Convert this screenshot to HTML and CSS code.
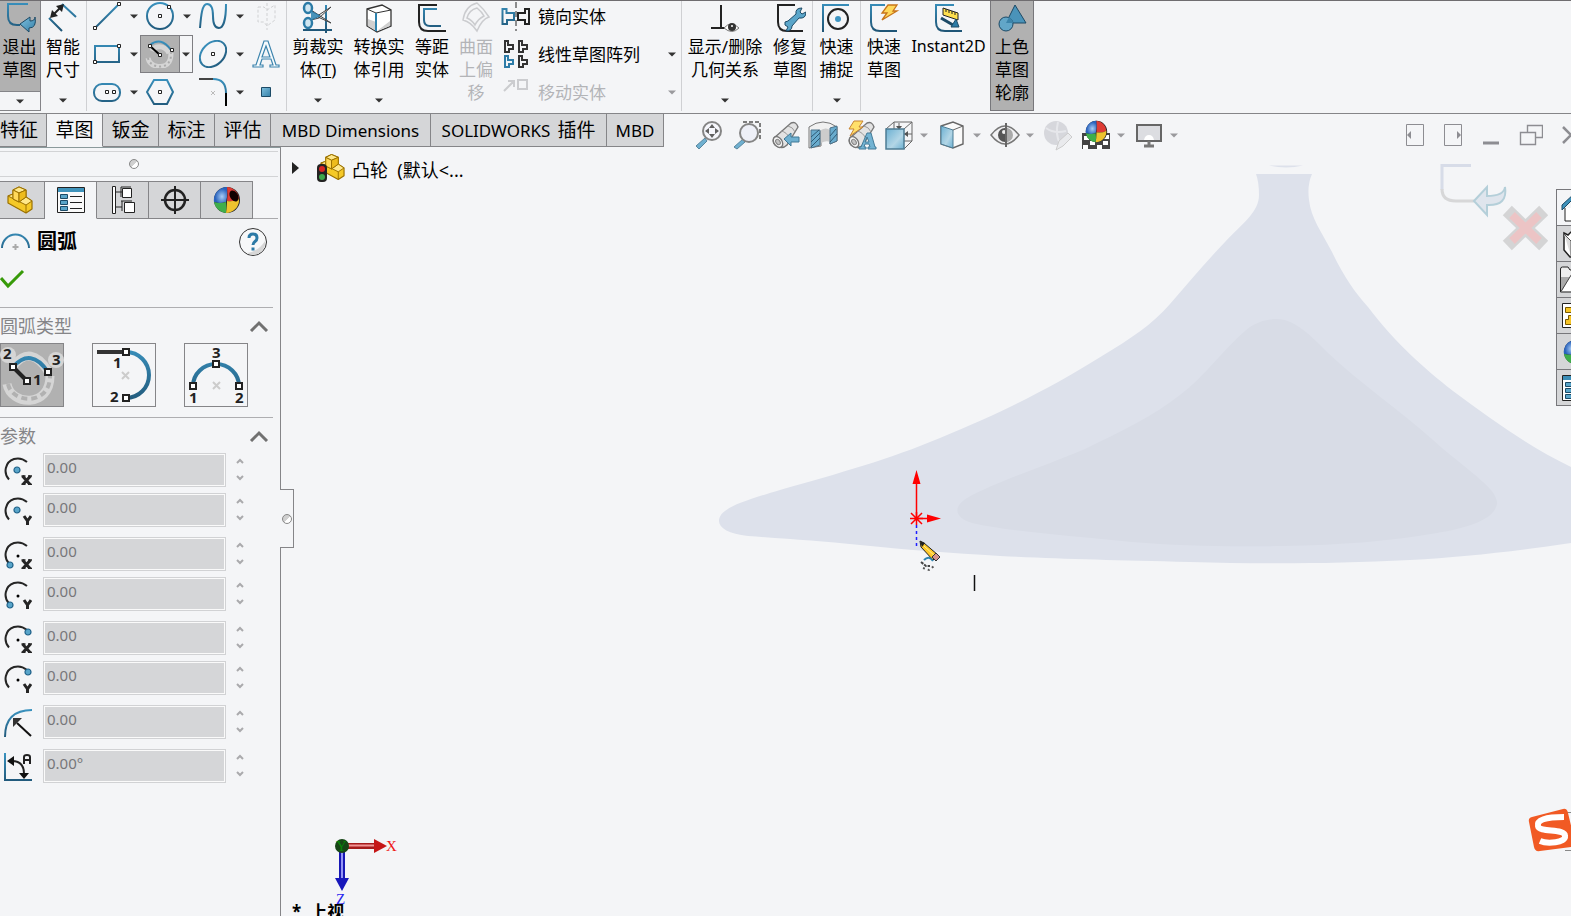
FILE: index.html
```html
<!DOCTYPE html>
<html lang="zh-CN">
<head>
<meta charset="utf-8">
<title>凸轮</title>
<link rel="stylesheet" href="styles.css">
</head>
<body>
<svg class="defs" width="0" height="0" aria-hidden="true">
  <defs>
    <linearGradient id="blue" gradientUnits="userSpaceOnUse" x1="0" y1="0" x2="0" y2="30"><stop offset="0" stop-color="#3a93c0"/><stop offset="1" stop-color="#1f5576"/></linearGradient>
    <linearGradient id="bigblue" gradientUnits="userSpaceOnUse" x1="0" y1="0" x2="0" y2="62"><stop offset="0" stop-color="#3a93c0"/><stop offset="1" stop-color="#1f5576"/></linearGradient>
    <linearGradient id="glass" x1="0" y1="0" x2="1" y2="1"><stop offset="0" stop-color="#7fc0de"/><stop offset="1" stop-color="#3580a8"/></linearGradient>
    <linearGradient id="pale" x1="0" y1="0" x2="1" y2="1"><stop offset="0" stop-color="#6bb0d2"/><stop offset=".6" stop-color="#b3d6e6"/><stop offset="1" stop-color="#6bb0d2"/></linearGradient>
    <radialGradient id="ballblue" cx=".6" cy=".6"><stop offset="0" stop-color="#a9cdf5"/><stop offset="1" stop-color="#2a63bd"/></radialGradient>
    <linearGradient id="knob" x1="0" y1="0" x2="1" y2="1"><stop offset=".5" stop-color="#d0d0d0"/><stop offset=".52" stop-color="#ffffff"/></linearGradient>
    <symbol id="down" viewBox="0 0 8 5"><path d="M0 .5h8L4 4.5z" fill="currentColor"/></symbol>
    <symbol id="part" viewBox="0 0 26 28">
      <path d="M1 10l5-2V4l6-3 7 3v7l6 4v8l-6 4L1 17z" fill="#f5c928" stroke="#9b7100" stroke-width="1.200" stroke-linejoin="round"/>
      <path d="M6 4l6 3 7-3-7-3zM1 10l5-2v5l6 3 7-5 6 4-6 4z" fill="#ffe88a" stroke="#9b7100" stroke-linejoin="round"/>
      <path d="M6 4l6 3v9l-6-3z" fill="#ffd95a" stroke="#9b7100"/>
      <path d="M12 7l7-3v7l-7 5z" fill="#eebc1c" stroke="#9b7100"/>
      <path d="M19 19v8" stroke="#9b7100"/>
    </symbol>
    <symbol id="cone" viewBox="0 0 28 28">
      <path d="M3 17L20 2q5-2 7 4L16 24q-5 5-12 0-3-3-1-7z" fill="#e3e3e3" stroke="#777" stroke-width="1.4"/>
      <path d="M10 10q6 1 9 8M17 5q5 1 7 6" fill="none" stroke="#999"/>
      <ellipse cx="7" cy="21" rx="4" ry="6" transform="rotate(-35 7 21)" fill="#f8f8f8" stroke="#777" stroke-width="1.4"/>
      <ellipse cx="7" cy="21" rx="2" ry="3" transform="rotate(-35 7 21)" fill="#c4c4c4" stroke="#888"/>
    </symbol>
    <symbol id="ball" viewBox="0 0 28 28">
      <circle cx="14" cy="14" r="13" fill="#222"/>
      <path d="M14 1A13 13 0 0 0 1 16q6 2 12 0 2-7 1-15z" fill="url(#ballblue)"/>
      <path d="M14 1q1 8 0 14 7 1 12-2A13 13 0 0 0 14 1z" fill="#de3b35"/>
      <path d="M1 16a13 13 0 0 0 12 11q1-5 0-11-6 2-12 0z" fill="#3fae4b"/>
      <path d="M13 27q1-5 1-12 7 1 12-2a13 13 0 0 1-13 14z" fill="#eec32e"/>
    </symbol>
    <symbol id="arc-mark" viewBox="0 0 28 28"><path d="M5 22.500C-1 16 1 5 10 2q7-2 13 3" fill="none" stroke="#252525" stroke-width="2"/></symbol>
    <symbol id="letter-x" viewBox="0 0 28 28"><path d="M18.500 19l8 9M26.500 19l-8 9" stroke="#252525" stroke-width="3"/><path d="M17.500 19h4M24 19h4M17.500 27.500h4M24 27.500h4" stroke="#252525" stroke-width="1.500"/></symbol>
    <symbol id="letter-y" viewBox="0 0 28 28"><path d="M20 19l3.500 5 3.500-5M23.500 23v5" fill="none" stroke="#252525" stroke-width="3"/></symbol>
    <symbol id="dot" viewBox="0 0 8 8"><circle cx="4" cy="4" r="3" fill="#58a5ca" stroke="#1f6189" stroke-width="1.200"/></symbol>
  </defs>
</svg>

<header class="ribbon">
  <div class="tool split-pressed">
    <button class="tool-main pressed">
      <svg class="icon" width="32" height="32" viewBox="0 0 32 32"><path d="M24 3H4v12q0 9 9 9h3" fill="none" stroke="url(#blue)" stroke-width="2"/><path d="M16 23l10-7v4q5 0 5-4 2 11-6 11v4z" fill="url(#glass)" stroke="#1c4a66"/></svg>
      <span>退出<br>草图</span>
    </button>
    <button class="drop" aria-label="退出草图选项"><svg class="arrow"><use href="#down"/></svg></button>
  </div>
  <div class="tool smart">
    <button class="tool-main">
      <svg class="icon" width="32" height="32" viewBox="0 0 32 32"><path d="M15 3l14 13M2 17l13 13" stroke="url(#blue)" stroke-width="2"/><path d="M5 15L15 5" stroke="#222" stroke-width="2"/><path d="M3 17l2-8 6 6zM17 3l-8 2 6 6z" fill="#222"/></svg>
      <span>智能<br>尺寸</span>
    </button>
    <button class="drop" aria-label="智能尺寸选项"><svg class="arrow"><use href="#down"/></svg></button>
  </div>
  <div class="sketch-grid">
    <button aria-label="直线"><svg width="28" height="28" viewBox="0 0 28 28"><path d="M2 26L26 2" stroke="url(#blue)" stroke-width="2"/><g class="node"><path d="M.5 24.500h3v3h-3zM24.500 .5h3v3h-3z"/></g></svg></button>
    <button class="more" aria-label="更多直线"><svg class="arrow"><use href="#down"/></svg></button>
    <button aria-label="圆"><svg width="28" height="28" viewBox="0 0 28 28"><circle cx="14" cy="14" r="13" fill="none" stroke="url(#blue)" stroke-width="2"/><g class="node"><path d="M12.500 12.500h3v3h-3zM21.500 3.500h3v3h-3z"/></g></svg></button>
    <button class="more" aria-label="更多圆"><svg class="arrow"><use href="#down"/></svg></button>
    <button aria-label="样条曲线"><svg width="28" height="28" viewBox="0 0 28 28"><path d="M1 26C2 14 3 2 8 2s6 5 6 12c0 8 2 12 6 12s7-8 7-24" fill="none" stroke="url(#blue)" stroke-width="2"/></svg></button>
    <button class="more" aria-label="更多样条曲线"><svg class="arrow"><use href="#down"/></svg></button>
    <button aria-label="基准面" disabled><svg width="28" height="28" viewBox="0 0 28 28"><path d="M6 5h6l3 3 8-5v15l-8 6-3-4H6zM15 1v27" fill="none" stroke="#d0d1d3" stroke-dasharray="3 2"/></svg></button>

    <button aria-label="矩形"><svg width="28" height="28" viewBox="0 0 28 28"><path d="M2 6h24v16H2z" fill="none" stroke="url(#blue)" stroke-width="2"/><g class="node"><path d="M.5 20.500h3v3h-3zM24.500 4.500h3v3h-3z"/></g></svg></button>
    <button class="more" aria-label="更多矩形"><svg class="arrow"><use href="#down"/></svg></button>
    <button class="arc-active" aria-label="圆心圆弧"><svg width="30" height="28" viewBox="0 0 30 28"><path d="M3 18c2 10 17 11 21 4 2-3 2-6 2-9M7 11c2-5 12-7 17 2" fill="none" stroke="#d5d5d5" stroke-width="5"/><path d="M3 18c2 10 17 11 21 4 2-3 2-6 2-9" fill="none" stroke="#aaa" stroke-width="2" stroke-dasharray="2 3"/><path d="M5 5q11-9 21 5" fill="none" stroke="url(#blue)" stroke-width="2"/><path d="M5 6l10 9" stroke="#000" stroke-width="2"/><g class="node"><path d="M3.500 4.500h3v3h-3zM13.500 13.500h3v3h-3zM25.500 8.500h3v3h-3z"/></g></svg></button>
    <button class="more arc-more" aria-label="更多圆弧"><svg class="arrow"><use href="#down"/></svg></button>
    <button aria-label="椭圆"><svg width="28" height="28" viewBox="0 0 28 28"><ellipse cx="14" cy="14" rx="15" ry="11" transform="rotate(-45 14 14)" fill="none" stroke="url(#blue)" stroke-width="2"/><g class="node"><path d="M12.500 12.500h3v3h-3z"/></g></svg></button>
    <button class="more" aria-label="更多椭圆"><svg class="arrow"><use href="#down"/></svg></button>
    <button aria-label="文字"><svg width="28" height="28" viewBox="0 0 28 28"><path d="M12 1h4l8 24h3v2h-9v-2h3l-2-6H10l-2 6h3v2H1v-2h3zM14 6l-4 11h8z" fill="#f7fbfd" stroke="#3c84ad" stroke-width="1.200"/></svg></button>

    <button aria-label="直槽口"><svg width="28" height="28" viewBox="0 0 28 28"><rect x="1" y="6" width="26" height="17" rx="8" fill="none" stroke="url(#blue)" stroke-width="2"/><g class="node"><path d="M12.500 12.500h3v3h-3zM19.500 12.500h3v3h-3z"/></g></svg></button>
    <button class="more" aria-label="更多槽口"><svg class="arrow"><use href="#down"/></svg></button>
    <button aria-label="多边形"><svg width="28" height="28" viewBox="0 0 28 28"><path d="M1 14L8 2h13l6 12-6 12H8z" fill="none" stroke="url(#blue)" stroke-width="2"/><g class="node"><path d="M12.500 12.500h3v3h-3z"/></g></svg></button>
    <span></span>
    <button aria-label="圆角"><svg width="28" height="28" viewBox="0 0 28 28"><path d="M0 1h14" stroke="#444" stroke-width="2"/><path d="M14 1q13 0 13 14" fill="none" stroke="url(#blue)" stroke-width="2"/><path d="M27 15v13" stroke="#000" stroke-width="2"/><path d="M12 13l4 4m0-4l-4 4" stroke="#bbb"/></svg></button>
    <button class="more" aria-label="更多圆角"><svg class="arrow"><use href="#down"/></svg></button>
    <button aria-label="点"><svg width="28" height="28" viewBox="0 0 28 28"><path d="M9.500 9.500h9v9h-9z" fill="url(#glass)" stroke="#1c4a66"/></svg></button>
  </div>
  <div class="group edit">
    <div class="tool w62">
      <button class="tool-main">
        <svg class="icon" width="32" height="32" viewBox="0 0 32 32"><path d="M24 4v28M1 29h29" stroke="url(#blue)" stroke-width="2"/><path d="M9 9l20 13-13-6zM9 19L29 6 17 17z" fill="#eee" stroke="#444"/><g fill="#cfe6f1" stroke="#2b7ba6" stroke-width="2.500"><ellipse cx="6" cy="7" rx="4" ry="5"/><ellipse cx="6" cy="22" rx="4" ry="5"/></g><path d="M9 10l9 5-9 4" fill="#4a94ba" stroke="#2b7ba6"/></svg>
        <span>剪裁实<br>体(<u>T</u>)</span>
      </button>
      <button class="drop" aria-label="剪裁选项"><svg class="arrow"><use href="#down"/></svg></button>
    </div>
    <div class="tool w60">
      <button class="tool-main">
        <svg class="icon" width="32" height="32" viewBox="0 0 32 32"><path d="M4 8l15-4 9 5v16l-14 6-10-6z" fill="#fff" stroke="#333" stroke-width="1.300"/><path d="M5 18l8 3v9l-8-5zM14 30l13-10v5z" fill="#d0d0d0"/><path d="M4 8l9 4 15-3" fill="none" stroke="#333"/><path d="M13 12v18" stroke="#2f83ae" stroke-width="2"/></svg>
        <span>转换实<br>体引用</span>
      </button>
      <button class="drop" aria-label="转换选项"><svg class="arrow"><use href="#down"/></svg></button>
    </div>
    <div class="tool w46">
      <button class="tool-main">
        <svg class="icon" width="32" height="32" viewBox="0 0 32 32"><path d="M21 4H3v17q0 9 9 9h18" fill="none" stroke="#222" stroke-width="2"/><path d="M21 8H8v11q0 6 6 6h11" fill="none" stroke="url(#blue)" stroke-width="2"/></svg>
        <span>等距<br>实体</span>
      </button>
    </div>
    <div class="tool w42">
      <button class="tool-main" disabled>
        <svg class="icon" width="32" height="32" viewBox="0 0 32 32"><path d="M3 19Q5 5 17 2q7 6 12 14-7 2-12 14-6-9-14-11zm4-2q2-8 10-10 5 4 7 8-6 3-9 9-3-5-8-7z" fill="none" stroke="#cbcccf" stroke-width="1.500"/></svg>
        <span>曲面<br>上偏<br>移</span>
      </button>
    </div>
    <div class="stack">
      <div class="stack-row"><button><svg width="30" height="30" viewBox="0 0 30 30"><path d="M1.500 8h4v4H13v7H6v4H1.500z" fill="none" stroke="url(#blue)" stroke-width="2"/><path d="M28 8h-4v4h-7v7h7v4h4z" fill="none" stroke="#222" stroke-width="2"/><path d="M15 1v29" stroke="#222" stroke-dasharray="6 3"/></svg>镜向实体</button></div>
      <div class="stack-row"><button><svg width="30" height="30" viewBox="0 0 30 30"><g fill="none" stroke="#333" stroke-width="2"><path d="M4 2h3v4h5v4H8v3H4zM18 2h3v4h5v4h-4v3h-4zM18 17h3v4h5v4h-4v3h-4z"/></g><path d="M4 17h3v4h5v4H8v3H4z" fill="none" stroke="#2d7ca8" stroke-width="2"/></svg>线性草图阵列</button><button class="more" aria-label="更多阵列"><svg class="arrow"><use href="#down"/></svg></button></div>
      <div class="stack-row"><button disabled><svg width="30" height="30" viewBox="0 0 30 30"><path d="M3 14L12 5M7 4h6v6M17 3h9v9h-9z" fill="none" stroke="#cbcccf" stroke-width="2"/></svg>移动实体</button><button class="more" aria-label="更多移动"><svg class="arrow dim"><use href="#down"/></svg></button></div>
    </div>
  </div>
  <div class="group">
    <div class="tool w86">
      <button class="tool-main">
        <svg class="icon" width="32" height="32" viewBox="0 0 32 32"><path d="M12 4v22M2 27h14" stroke="#222" stroke-width="2"/><path d="M15 27q7-8 15 0-7 7-15 0z" fill="#fff" stroke="#777"/><circle cx="23" cy="26" r="4" fill="#333"/><circle cx="23" cy="25" r="1" fill="#fff"/></svg>
        <span>显示/删除<br>几何关系</span>
      </button>
      <button class="drop" aria-label="几何关系选项"><svg class="arrow"><use href="#down"/></svg></button>
    </div>
    <div class="tool w44">
      <button class="tool-main">
        <svg class="icon" width="32" height="32" viewBox="0 0 32 32"><path d="M21 4H4v17q0 9 9 9h16" fill="none" stroke="#222" stroke-width="2"/><path d="M11 21l3-1 8-7q-1-6 6-6l-2 4 2 2 4-2q0 7-7 6l-7 8q0 5-6 5l2-4-3-2z" fill="#5ba6ca" stroke="#1c4a66"/></svg>
        <span>修复<br>草图</span>
      </button>
    </div>
  </div>
  <div class="group">
    <div class="tool w47">
      <button class="tool-main">
        <svg class="icon" width="32" height="32" viewBox="0 0 32 32"><path d="M2 31V4h26" fill="none" stroke="url(#blue)" stroke-width="2"/><circle cx="17" cy="18" r="10" fill="none" stroke="#222" stroke-width="2"/><circle cx="17" cy="18" r="3" fill="#3e95c2"/></svg>
        <span>快速<br>捕捉</span>
      </button>
      <button class="drop" aria-label="捕捉选项"><svg class="arrow"><use href="#down"/></svg></button>
    </div>
  </div>
  <div class="group">
    <div class="tool w46">
      <button class="tool-main">
        <svg class="icon" width="32" height="32" viewBox="0 0 32 32"><path d="M17 4H3v17q0 9 9 9h17" fill="none" stroke="url(#blue)" stroke-width="2"/><path d="M20 4h9l-4 6h4L14 19l5-7h-5z" fill="#ffd95b" stroke="#c7741a" stroke-width="1.300"/></svg>
        <span>快速<br>草图</span>
      </button>
    </div>
    <div class="tool w83">
      <button class="tool-main">
        <svg class="icon" width="32" height="32" viewBox="0 0 32 32"><path d="M21 4H3v17q0 9 9 9h17" fill="none" stroke="url(#blue)" stroke-width="2"/><path d="M10 7l15 5v7L10 14z" fill="#ffdf4d" stroke="#222"/><path d="M13 8v3M16 9v3M19 10v3M22 11v3" stroke="#222"/><path d="M8 17l12 7" stroke="#1c4a66" stroke-width="3"/><path d="M18 26h8l-3-8z" fill="#2b7ba6" stroke="#1c4a66"/></svg>
        <span class="latin">Instant2D</span>
      </button>
    </div>
    <div class="tool w44 shaded">
      <button class="tool-main pressed">
        <svg class="icon" width="32" height="32" viewBox="0 0 32 32"><path d="M19 4l11 18H10z" fill="#4a93b9" stroke="#1c4a66"/><circle cx="10" cy="23" r="7" fill="#62a6c8" stroke="#1c4a66"/><path d="M10 22l3-6q4 3 4 6z" fill="#3c84aa"/></svg>
        <span>上色<br>草图<br>轮廓</span>
      </button>
    </div>
  </div>
</header>

<div class="bar">
  <nav class="tabs">
    <button class="t47">特征</button><button class="t56 active">草图</button><button class="t56">钣金</button><button class="t56">标注</button><button class="t56">评估</button><button class="t160 latin">MBD Dimensions</button><button class="t176 latin">SOLIDWORKS <span class="cjk">插件</span></button><button class="t57 latin">MBD</button>
  </nav>
  <div class="view-tools">
    <button aria-label="整屏显示全图"><svg width="28" height="28" viewBox="0 0 28 28"><path d="M10 17l-9 8 3 3 8-8z" fill="#6fb0d0" stroke="#58869e"/><circle cx="17" cy="10" r="9" fill="#f6f7fc" stroke="#858585" stroke-width="2"/><path d="M17 3l3 4h-6zM17 17l3-4h-6zM10 10l4-3v6zM24 10l-4-3v6z" fill="#606060"/></svg></button>
    <button aria-label="局部放大"><svg width="28" height="28" viewBox="0 0 28 28"><path d="M10 1h17v17" fill="none" stroke="#555" stroke-width="1.500" stroke-dasharray="4 2"/><path d="M10 18l-9 8 3 2 8-7z" fill="#6fb0d0" stroke="#58869e"/><circle cx="16" cy="12" r="9" fill="#eef0f8" stroke="#858585" stroke-width="2"/></svg></button>
    <button aria-label="上一视图"><svg width="28" height="28" viewBox="0 0 28 28"><use href="#cone"/><path d="M13 18l7-6v4h8v5h-8v4z" fill="#6fb0d0" stroke="#3e7896"/></svg></button>
    <button aria-label="剖面视图"><svg width="28" height="28" viewBox="0 0 28 28"><path d="M0 6q14-10 28 0v14l-7 3V10q-5-3-9 0v15L0 27z" fill="#f1f1f1" stroke="#777"/><path d="M12 9q5-3 9 0v12q-4-2-9 1z" fill="#ccc"/><path d="M2 9h9v15l-9 3zM21 7l7-2v15l-7 3z" fill="#69acce" stroke="#4c7188"/><path d="M2 16l8-7M2 21l9-9M2 26l9-9M21 15l6-7M21 21l7-8" stroke="#2e5a75"/></svg></button>
    <button aria-label="动态注解视图"><svg width="28" height="28" viewBox="0 0 28 28"><use href="#cone"/><path d="M7 0h9l-4 6h4L3 15l4-7H2z" fill="#ffe06b" stroke="#c78333"/><path d="M20 12h4l4 14h1v2h-8v-2h2l-1-3h-4l-1 3h2v2h-7v-2h2zM20 16l-2 5h4z" fill="#72b3d3" stroke="#437b98"/></svg></button>
    <button class="combo" aria-label="视图定向"><svg width="28" height="28" viewBox="0 0 28 28"><path d="M1 8l8-7h18v19l-8 8M19 8l8-7M9 1v7M19 20h8M14 2v8M27 13h-8" fill="none" stroke="#666"/><path d="M14 9l-3-4h6zM19 13l4-3v6z" fill="#555"/><path d="M1 8h18v20H1z" fill="url(#pale)" stroke="#4d7c94" stroke-width="1.500"/></svg><svg class="arrow dim"><use href="#down"/></svg></button>
    <button class="combo" aria-label="显示样式"><svg width="28" height="28" viewBox="0 0 28 28"><path d="M3 5l12-4 10 4v18l-10 4L3 23z" fill="#fafafa" stroke="#666" stroke-width="1.400"/><path d="M3 5l12 4v18L3 23z" fill="url(#pale)" stroke="#4d7c94"/><path d="M15 9l10-4" stroke="#666"/></svg><svg class="arrow dim"><use href="#down"/></svg></button>
    <button class="combo" aria-label="隐藏/显示项目"><svg width="28" height="28" viewBox="0 0 28 28"><path d="M0 14Q14-4 28 14 14 32 0 14z" fill="#f2f2f4" stroke="#777" stroke-width="1.500"/><circle cx="14" cy="14" r="7" fill="#555"/><path d="M15 7a7 7 0 0 1 0 14z" fill="#aaa"/><circle cx="13" cy="11" r="2" fill="#eee"/><path d="M15 2v24" stroke="#666" stroke-width="2"/></svg><svg class="arrow dim"><use href="#down"/></svg></button>
    <button aria-label="编辑外观" disabled><svg width="28" height="28" viewBox="0 0 28 28"><circle cx="12" cy="12" r="12" fill="#d6d7dc"/><path d="M2 7q8 6 20 3M14 1q-3 12 2 22" fill="none" stroke="#e6e7eb" stroke-width="2"/><path d="M12 29l3-9 9-8 4 4-9 9z" fill="#e9eaed" stroke="#ccc"/></svg></button>
    <button class="combo" aria-label="应用布景"><svg width="28" height="28" viewBox="0 0 28 28"><path d="M0 12h28v16H0z" fill="#444"/><path d="M2 15h5v4H2zM8 20h5v4H8zM15 24h5v4h-5zM21 20h5v4h-5zM22 14h5v4h-5zM1 24h5v4H1z" fill="#fff"/><svg x="3" y="-1" width="23" height="23"><use href="#ball"/></svg></svg><svg class="arrow dim"><use href="#down"/></svg></button>
    <button class="combo" aria-label="视图设定"><svg width="28" height="28" viewBox="0 0 28 28"><path d="M2 4h24v16H2z" fill="#dcdde1" stroke="#666" stroke-width="2"/><path d="M9 19q1-5 5-5t5 5z" fill="#fff"/><path d="M14 20v4M9 25h10" stroke="#777" stroke-width="3"/></svg><svg class="arrow dim"><use href="#down"/></svg></button>
  </div>
  <div class="window-tools">
    <button aria-label="左窗格"><svg width="20" height="24" viewBox="0 0 20 24"><path d="M1.500 1.500h17v21h-17z" fill="none" stroke="#8d8d92"/><path d="M2 12l4-4v8z" fill="#8d8d92"/></svg></button>
    <button aria-label="右窗格"><svg width="20" height="24" viewBox="0 0 20 24"><path d="M1.500 1.500h17v21h-17z" fill="none" stroke="#8d8d92"/><path d="M18 12l-4-4v8z" fill="#8d8d92"/></svg></button>
    <button aria-label="最小化"><svg width="20" height="24" viewBox="0 0 20 24"><path d="M2 20h16" stroke="#8d8d92" stroke-width="3"/></svg></button>
    <button aria-label="还原"><svg width="24" height="24" viewBox="0 0 24 24"><path d="M8.500 9V2.500h15v12H17M1.500 9.500h15v12h-15z" fill="none" stroke="#8d8d92" stroke-width="1.400"/></svg></button>
    <button aria-label="关闭"><svg width="20" height="24" viewBox="0 0 20 24"><path d="M2 4l16 16M18 4L2 20" stroke="#8d8d92" stroke-width="2.500"/></svg></button>
  </div>
</div>

<main class="work">
  <aside class="panel">
    <div class="grip"><svg width="12" height="12" viewBox="0 0 12 12"><circle cx="6" cy="6" r="4.500" fill="url(#knob)" stroke="#888"/></svg></div>
    <nav class="panel-tabs">
      <button class="p45" aria-label="设计树"><svg width="26" height="28"><use href="#part"/></svg></button>
      <button class="p52 active" aria-label="属性"><svg width="28" height="28" viewBox="0 0 28 28"><path d="M.5 1.500h27v25H.5z" fill="#fafafa" stroke="#222"/><path d="M1 2h26v4H1z" fill="#3f93bb"/><path d="M3.500 8.500h7v4h-7zM3.500 14.500h7v4h-7zM3.500 20.500h7v4h-7z" fill="#5aa5c8" stroke="#1c4a66"/><path d="M13 10.500h12M13 16.500h12M13 22.500h12" stroke="#222"/></svg></button>
      <button class="p52" aria-label="配置"><svg width="28" height="28" viewBox="0 0 28 28"><path d="M3.500 .5h3v27h-3zM7 6h6M7 21h6" fill="#fff" stroke="#222"/><path d="M13.500 2.500h9v9h-9zM15.500 16.500h10v10h-10z" fill="#fff" stroke="#222"/><path d="M12 1h10M12 15h11M12 1v10M13 15v10" stroke="#222"/></svg></button>
      <button class="p52" aria-label="尺寸"><svg width="28" height="28" viewBox="0 0 28 28"><circle cx="14" cy="14" r="10" fill="none" stroke="#222" stroke-width="2.500"/><path d="M0 14h28M14 0v28" stroke="#222" stroke-width="2"/></svg></button>
      <button class="p52" aria-label="外观"><svg width="28" height="28" viewBox="0 0 28 28"><use href="#ball"/><ellipse cx="21" cy="10" rx="4" ry="6" transform="rotate(-30 21 10)" fill="#110000"/></svg></button>
    </nav>
    <div class="panel-title">
      <svg width="30" height="28" viewBox="0 0 30 28"><path d="M2 20a13 13 0 0 1 27 0" fill="none" stroke="url(#blue)" stroke-width="2"/><path d="M15.500 16v6M12.500 19h6" stroke="#aaa" stroke-width="2"/></svg>
      <h1>圆弧</h1>
      <button class="help" aria-label="帮助"><svg width="30" height="30" viewBox="0 0 30 30"><circle cx="15" cy="15" r="13.500" fill="#f7f8f9" stroke="#333"/><path d="M27 14a12 12 0 0 1-18 12q12-2 18-12z" fill="#d7d7d7"/><path d="M11 11q0-4 4-4t4 4q0 2-2 3.500t-2 3.500" fill="none" stroke="#2c7aa6" stroke-width="3"/><path d="M13.500 20.500h3v3h-3z" fill="#2c7aa6"/></svg></button>
    </div>
    <button class="ok" aria-label="确定"><svg width="26" height="20" viewBox="0 0 26 20"><path d="M1 9l7 8L23 2" fill="none" stroke="#379a09" stroke-width="3"/></svg></button>

    <section class="section types">
      <div class="section-head"><h2>圆弧类型</h2><button aria-label="折叠圆弧类型"><svg width="20" height="12" viewBox="0 0 20 12"><path d="M2 11l8-8 8 8" fill="none" stroke="#717171" stroke-width="3"/></svg></button></div>
      <div class="type-row">
        <button class="selected" aria-label="圆心/起/终点画弧"><svg width="62" height="62" viewBox="0 0 62 62"><path d="M6 40C10 62 49 64 49 32M12 22q18-22 35 5" fill="none" stroke="#d5d5d5" stroke-width="9"/><path d="M7 40C11 60 49 62 49 32" fill="none" stroke="#b1b1b1" stroke-width="4" stroke-dasharray="6 4"/><circle cx="7" cy="11" r="8" fill="#d5d5d5"/><circle cx="55" cy="16" r="8" fill="#d5d5d5"/><path d="M12 23q18-20 35 5" fill="none" stroke="url(#bigblue)" stroke-width="4"/><path d="M12 23l14 14" stroke="#222" stroke-width="4"/><g class="node thick"><path d="M9 20h6v6H9zM23 34h6v6h-6zM44 25h6v6h-6z"/></g><text x="2" y="15">2</text><text x="51" y="21">3</text><text x="32" y="41">1</text></svg></button>
        <button aria-label="切线弧"><svg width="62" height="62" viewBox="0 0 62 62"><path d="M4 8h28" stroke="#333" stroke-width="4"/><path d="M33 8a23 23 0 0 1 0 46" fill="none" stroke="url(#bigblue)" stroke-width="4"/><path d="M29 28l7 7m0-7l-7 7" stroke="#ccc" stroke-width="2"/><g class="node thick"><path d="M30 5h6v6h-6zM30 51h6v6h-6z"/></g><text x="20" y="24">1</text><text x="17" y="58">2</text></svg></button>
        <button aria-label="三点圆弧"><svg width="62" height="62" viewBox="0 0 62 62"><path d="M8 42a23 22 0 0 1 46 0" fill="none" stroke="url(#bigblue)" stroke-width="4"/><path d="M28 38l7 7m0-7l-7 7" stroke="#ccc" stroke-width="2"/><g class="node thick"><path d="M5 39h6v6H5zM28 17h6v6h-6zM51 39h6v6h-6z"/></g><text x="27" y="14">3</text><text x="4" y="59">1</text><text x="50" y="59">2</text></svg></button>
      </div>
    </section>

    <section class="section params">
      <div class="section-head"><h2>参数</h2><button aria-label="折叠参数"><svg width="20" height="12" viewBox="0 0 20 12"><path d="M2 11l8-8 8 8" fill="none" stroke="#717171" stroke-width="3"/></svg></button></div>
      <div class="pair">
        <div class="field"><label for="cx" aria-label="圆心 X"><svg width="28" height="28"><use href="#arc-mark"/><use href="#letter-x"/><use href="#dot" x="9" y="9" width="8" height="8"/></svg></label><input id="cx" value="0.00" readonly><span class="spin"><button aria-label="增加"><svg><path d="M1 5l3-3 3 3"/></svg></button><button aria-label="减少"><svg><path d="M1 1l3 3 3-3"/></svg></button></span></div>
        <div class="field"><label for="cy" aria-label="圆心 Y"><svg width="28" height="28"><use href="#arc-mark"/><use href="#letter-y"/><use href="#dot" x="9" y="9" width="8" height="8"/></svg></label><input id="cy" value="0.00" readonly><span class="spin"><button aria-label="增加"><svg><path d="M1 5l3-3 3 3"/></svg></button><button aria-label="减少"><svg><path d="M1 1l3 3 3-3"/></svg></button></span></div>
      </div>
      <div class="pair">
        <div class="field"><label for="sx" aria-label="起点 X"><svg width="28" height="28"><use href="#arc-mark"/><use href="#letter-x"/><use href="#dot" x="2" y="20" width="8" height="8"/><circle cx="14" cy="15" r="1.500"/></svg></label><input id="sx" value="0.00" readonly><span class="spin"><button aria-label="增加"><svg><path d="M1 5l3-3 3 3"/></svg></button><button aria-label="减少"><svg><path d="M1 1l3 3 3-3"/></svg></button></span></div>
        <div class="field"><label for="sy" aria-label="起点 Y"><svg width="28" height="28"><use href="#arc-mark"/><use href="#letter-y"/><use href="#dot" x="2" y="20" width="8" height="8"/><circle cx="14" cy="15" r="1.500"/></svg></label><input id="sy" value="0.00" readonly><span class="spin"><button aria-label="增加"><svg><path d="M1 5l3-3 3 3"/></svg></button><button aria-label="减少"><svg><path d="M1 1l3 3 3-3"/></svg></button></span></div>
      </div>
      <div class="pair">
        <div class="field"><label for="ex" aria-label="终点 X"><svg width="28" height="28"><use href="#arc-mark"/><use href="#letter-x"/><use href="#dot" x="20" y="3" width="8" height="8"/><circle cx="14" cy="15" r="1.500"/></svg></label><input id="ex" value="0.00" readonly><span class="spin"><button aria-label="增加"><svg><path d="M1 5l3-3 3 3"/></svg></button><button aria-label="减少"><svg><path d="M1 1l3 3 3-3"/></svg></button></span></div>
        <div class="field"><label for="ey" aria-label="终点 Y"><svg width="28" height="28"><use href="#arc-mark"/><use href="#letter-y"/><use href="#dot" x="20" y="3" width="8" height="8"/><circle cx="14" cy="15" r="1.500"/></svg></label><input id="ey" value="0.00" readonly><span class="spin"><button aria-label="增加"><svg><path d="M1 5l3-3 3 3"/></svg></button><button aria-label="减少"><svg><path d="M1 1l3 3 3-3"/></svg></button></span></div>
      </div>
      <div class="field"><label for="radius" aria-label="半径"><svg width="28" height="28"><path d="M1 28Q1 1 28 1" fill="none" stroke="url(#blue)" stroke-width="2"/><path d="M27 27L13 14" stroke="#111" stroke-width="2"/><path d="M9 9h9l-9 9z" fill="#333"/></svg></label><input id="radius" value="0.00" readonly><span class="spin"><button aria-label="增加"><svg><path d="M1 5l3-3 3 3"/></svg></button><button aria-label="减少"><svg><path d="M1 1l3 3 3-3"/></svg></button></span></div>
      <div class="field"><label for="angle" aria-label="角度"><svg width="28" height="28"><path d="M1 0v27h27" fill="none" stroke="url(#blue)" stroke-width="2"/><path d="M8 8q12 0 12 13" fill="none" stroke="#222" stroke-width="2"/><path d="M3 8l7-5v10zM15 20h10l-5 6z" fill="#111"/><path d="M20 11V4q0-2 3-2t3 2v7M20 7h6" fill="none" stroke="#222" stroke-width="2"/></svg></label><input id="angle" value="0.00°" readonly><span class="spin"><button aria-label="增加"><svg><path d="M1 5l3-3 3 3"/></svg></button><button aria-label="减少"><svg><path d="M1 1l3 3 3-3"/></svg></button></span></div>
    </section>
    <button class="splitter" aria-label="折叠面板"><svg width="12" height="12" viewBox="0 0 12 12"><circle cx="6" cy="6" r="4.500" fill="url(#knob)" stroke="#888"/></svg></button>
  </aside>

  <div class="viewport">
    <svg class="scene" width="1290" height="769" viewBox="281 147 1290 769">
      <path d="M1269 165.500q17 4 34 0z" fill="#dde1eb"/>
      <path d="M1256 174H1312Q1307 185 1309 200C1311 218 1321 231 1332 252C1344 277 1354 291 1368 307C1396 344 1424 368 1453 391C1492 420 1528 446 1571 467V543C1510 552 1462 557 1410 560C1330 564 1260 564 1190 562C1110 560 1060 559 1000 556C950 553 910 550 860 545C820 541 790 539 748 536C729 534 719 528 719 521C719 509 740 502 780 490C840 473 890 459 940 438C1010 409 1050 388 1102 356C1130 339 1152 325 1170 304C1188 283 1205 263 1225 242C1243 223 1259 212 1259 195Q1259 182 1256 174z" fill="#dde1eb"/>
      <path d="M1277 319c-10 0-22 3-32 12-24 21-40 45-65 64-25 20-60 37-95 54-45 19-90 33-118 49-14 9-13 19 5 25 40 9 100 13 160 19 50 4 95 5 150 4 60-1 110-5 155-13 30-5 57-13 60-29 2-15-32-35-64-64-35-31-73-57-105-87-21-22-36-34-51-34z" fill="#d8dce6"/>
      <g class="origin"><path d="M916.500 518.500V480M916 518.500h16" stroke="#f00" stroke-width="1.500"/><path d="M916.500 470l4 14h-8zM941 518.500l-14 4v-8z" fill="#f00"/><path d="M911 513l11 11M922 513l-11 11M910 518.500h13M916.500 512v13" stroke="#f00" stroke-width="1.500"/><path d="M916.500 525v22" stroke="#1f1fff" stroke-width="1.500" stroke-dasharray="3 3"/></g>
      <g><path d="M920 541l4 2 14 12-5 5-12-13z" fill="#ffc928" stroke="#222"/><path d="M920 541l5 2-3 4z" fill="#222"/><path d="M924 546l12 11" stroke="#fff092"/><path d="M936 553l4 4-4 4-4-4z" fill="#d4938f" stroke="#333"/><path d="M924 560q5-5 9 1" fill="none" stroke="#2d83ae" stroke-width="2"/><path d="M921 562l5 4h4" fill="none" stroke="#444" stroke-width="2" stroke-dasharray="3 1"/><path d="M923 568l6 2 5-4" fill="none" stroke="#555" stroke-width="2" stroke-dasharray="2 3"/></g>
      <path d="M974.500 575v16" stroke="#111" stroke-width="1.500"/>
      <g opacity=".5"><path d="M1471 165.500h-29V190" fill="none" stroke="#bcc5db" stroke-width="3"/><path d="M1442 189q0 12 14 12h18" fill="none" stroke="#bbb" stroke-width="3"/><path d="M1474 201l13-14v9q17 0 18-9 3 19-18 18v10z" fill="#ccd7e4" stroke="#76aabd" stroke-width="2"/><path d="M1512 215l27 26M1539 215l-27 26" stroke="#b5b5b5" stroke-width="13" stroke-linejoin="round" stroke-linecap="square"/><path d="M1512 215l27 26M1539 215l-27 26" stroke="#e69595" stroke-width="8"/></g>
      <g><path d="M342 846h32" stroke="#a51b1b" stroke-width="6"/><path d="M342 845.500h32" stroke="#f29494" stroke-width="2"/><path d="M374 839l13 7-13 7z" fill="#c51717"/><path d="M342 847v32" stroke="#1717b5" stroke-width="6"/><path d="M342 847v32" stroke="#9595f5" stroke-width="2"/><path d="M335 878h14l-7 13z" fill="#1717bb"/><circle cx="342" cy="846" r="7" fill="#164516"/><text class="axis" x="336" y="851" fill="#078507">Y</text><text class="axis" x="386" y="851" fill="#ef1515">X</text><text class="axis" x="336" y="904" fill="#2828ef">Z</text></g>
      <g><path d="M1560 812.500h12M1565 850.500h7" stroke="#888"/><path d="M1532 817l31-8q4-1 5 4l7 29q1 4-4 5l-31 4q-5 1-6-4l-5-25q-1-4 3-5z" fill="#f15a24"/><path d="M1564 817q-28 0-26 9c1 7 27 2 27 10 1 7-18 8-25 5" fill="none" stroke="#fff" stroke-width="6"/></g>
    </svg>
    <div class="tree"><svg width="7" height="12" viewBox="0 0 7 12"><path d="M0 0l7 6-7 6z" fill="#222"/></svg><svg width="30" height="30" viewBox="0 0 30 30"><svg x="4" y="0" width="25" height="28"><use href="#part"/></svg><rect x="1" y="11" width="10" height="18" rx="4" fill="#222"/><circle cx="6" cy="16" r="3" fill="#d92525"/><circle cx="6" cy="24" r="3" fill="#3ca64a"/></svg><span>凸轮&nbsp; (默认&lt;...</span></div>
    <div class="view-name"><span>*</span><span>上视</span></div>
    <nav class="task-pane">
      <button class="active" aria-label="资源"><svg width="30" height="30" viewBox="0 0 30 30"><path d="M5 15v13h20V15" fill="#fff" stroke="#222"/><path d="M2 17L15 4l13 13v-5L15 0 2 12z" fill="#3e92bb" stroke="#1c4a66"/></svg></button>
      <button aria-label="设计库"><svg width="30" height="30" viewBox="0 0 30 30"><path d="M4 4l4 2 3-3 10 3v21L10 28l-6-7z" fill="#fff" stroke="#222" stroke-width="1.500"/><path d="M4 5l7 7v15" fill="#ddd" stroke="#555"/></svg></button>
      <button aria-label="文件探索器"><svg width="30" height="30" viewBox="0 0 30 30"><path d="M.5 26V4q0-2 2-2H8l2 3h15v22H.5z" fill="#eee" stroke="#222"/><path d="M1 12h10L2 26H1z" fill="#aaa"/><path d="M11 10L2 26h20z" fill="#fff"/><path d="M13 7L1 26.500" stroke="#444"/></svg></button>
      <button aria-label="视图调色板"><svg width="30" height="30" viewBox="0 0 30 30"><path d="M2.500 2.500h25v24h-25z" fill="#fff" stroke="#222"/><path d="M5.500 6.500h12v5h-12zM5.500 18.500h3v-4h9v9h-12z" fill="#f6c426" stroke="#795a00"/></svg></button>
      <button aria-label="外观"><svg width="30" height="30" viewBox="0 0 30 30"><svg x="3" y="2" width="26" height="26"><use href="#ball"/></svg></svg></button>
      <button aria-label="自定义属性"><svg width="30" height="30" viewBox="0 0 30 30"><path d="M2.500 2.500h25v25h-25z" fill="#fff" stroke="#222"/><path d="M3 3h24v4H3z" fill="#3b8db6"/><path d="M5.500 9.500h9v4h-9zM5.500 15.500h9v4h-9zM5.500 21.500h9v4h-9z" fill="#5aa5c8" stroke="#1c4a66"/></svg></button>
    </nav>
  </div>
</main>
</body>
</html>
```
FILE: styles.css
```css
* { box-sizing: border-box; }
body {
  margin: 0;
  height: 100vh;
  display: flex;
  flex-direction: column;
  overflow: hidden;
  background: #f4f5f7;
  color: #000;
  font: 17px/23px "Noto Sans", "Noto Sans CJK SC", sans-serif;
}
button {
  margin: 0;
  padding: 0;
  border: 0;
  background: none;
  color: inherit;
  font: inherit;
  display: flex;
  align-items: center;
  justify-content: center;
  flex-shrink: 0;
}
svg { display: block; flex-shrink: 0; }
.defs { position: absolute; }
.arrow { width: 8px; height: 5px; color: #333; }
.arrow.dim { color: #9a9a9d; }
.node { fill: #fff; stroke: #222; stroke-width: 1; }
.node.thick { stroke-width: 2; }
button:disabled { color: #b3b4b7; }

/* Command ribbon */
.ribbon {
  display: flex;
  flex-shrink: 0;
  height: 113px;
  border-top: 1px solid #6f6d70;
}
.group { display: flex; height: 110px; border-left: 1px solid #cfd0d3; }
.tool { display: flex; flex-direction: column; height: 110px; flex-shrink: 0; }
.tool-main { flex-direction: column; justify-content: flex-start; flex: 1; width: 100%; white-space: nowrap; }
.tool-main .icon { margin-bottom: 2px; }
.drop { height: 22px; width: 100%; }
.pressed { background: #b1b1b1; }
.split-pressed { width: 41px; padding-right: 1px; border-right: 1px solid #848488; border-bottom: 1px solid #848488; background: #b1b1b1; }
.split-pressed .drop { width: 40px; border-top: 1px solid #848488; height: 19px; background: #f4f5f7; }
.smart { width: 44px; margin-right: 1px; }
.shaded { border: 1px solid #77777b; border-top: 0; }
.w42 { width: 42px; }
.w44 { width: 44px; }
.w46 { width: 46px; }
.w47 { width: 47px; }
.w60 { width: 60px; }
.w62 { width: 62px; }
.w83 { width: 83px; }
.w86 { width: 86px; }
.latin { font-size: 16px; }
.sketch-grid {
  display: grid;
  grid-template-columns: 40px 13px 40px 13px 40px 13px 40px;
  grid-template-rows: 30px 38px 30px;
  row-gap: 4px;
  height: 110px;
  border-left: 1px solid #cfd0d3;
  flex-shrink: 0;
}
.sketch-grid button { width: 100%; height: 100%; }
.sketch-grid .arc-active { background: #b1b1b1; border: 1px solid #7e7e82; }
.sketch-grid .arc-more { border: 1px solid #7e7e82; border-left: 0; }
.stack { display: grid; grid-template-rows: 30px 38px 30px; row-gap: 4px; width: 184px; padding-left: 4px; }
.stack-row { display: flex; align-items: center; justify-content: space-between; }
.stack-row button:first-child { gap: 7px; }
.stack-row .more { width: 18px; }

/* Command tabs with view and window tools */
.bar {
  display: flex;
  align-items: flex-start;
  height: 34px;
  border-top: 1px solid #858588;
  flex-shrink: 0;
}
.tabs { display: flex; flex-shrink: 0; }
.tabs button {
  height: 33px;
  border-right: 1px solid #858588;
  border-bottom: 1px solid #858588;
  background: #d5d6d8;
  font-size: 19px;
  white-space: nowrap;
}
.tabs .active { background: #f4f5f7; border-bottom-color: #f4f5f7; }
.tabs .latin { font-size: 17px; gap: 7px; }
.cjk { font-size: 19px; }
.tabs .t47 { width: 47px; justify-content: flex-start; }
.t56 { width: 56px; }
.t57 { width: 57px; }
.t160 { width: 160px; }
.t176 { width: 176px; }
.view-tools { display: flex; padding: 7px 0 0 31px; flex: 1; }
.view-tools button { margin-right: 10px; }
.view-tools svg { overflow: visible; }
.view-tools .combo { gap: 7px; margin-right: 10px; }
.window-tools { display: flex; gap: 18px; padding-top: 9px; margin-right: -10px; flex-shrink: 0; }

/* Property panel */
.work { display: flex; flex: 1; min-height: 0; }
.panel {
  position: relative;
  width: 281px;
  flex-shrink: 0;
  border-top: 1px solid #8b9a9c;
  border-right: 1px solid #858588;
}
.grip {
  display: flex;
  justify-content: center;
  align-items: center;
  height: 26px;
  margin: 3px 2px 4px 0;
  padding-right: 10px;
  border-top: 1px solid #d2d3d5;
  border-bottom: 1px solid #d2d3d5;
}
.panel-tabs { display: flex; margin-right: 2px; border-bottom: 1px solid #aaaaad; height: 38px; }
.panel-tabs button { height: 38px; border: 1px solid #858588; border-left: 0; background: #d5d6d8; }
.panel-tabs .active { background: #f4f5f7; border-bottom-color: #f4f5f7; }
.p45 { width: 45px; }
.p52 { width: 52px; }
.panel-tabs .p45 { padding-right: 4px; }
.panel-title { display: flex; align-items: center; height: 46px; gap: 7px; padding: 0 12px 0 0; }
h1 { margin: 0; flex: 1; font-size: 20px; line-height: 24px; font-weight: bold; }
.ok { margin-top: 4px; }
.section { margin-right: 7px; border-top: 1px solid #aeaeb1; }
.types { margin-top: 18px; }
.section-head { display: flex; align-items: center; justify-content: space-between; height: 35px; padding-right: 4px; }
h2 { margin: 0; font-size: 18px; line-height: 24px; font-weight: normal; color: #858588; }
.type-row { display: flex; gap: 28px; padding-bottom: 10px; }
.type-row button { width: 64px; height: 64px; border: 1px solid #858588; }
.type-row svg { overflow: visible; }
.type-row .selected { background: #b1b1b1; }
.type-row text { font: bold 15px "Noto Sans", sans-serif; fill: #222; }
.pair { display: flex; flex-direction: column; gap: 6px; }
.params { display: flex; flex-direction: column; gap: 10px; }
.params .section-head { margin-bottom: -10px; }
.field { display: flex; height: 34px; padding-left: 4px; }
.field label { width: 39px; padding-top: 4px; }
.field input {
  width: 183px;
  height: 34px;
  padding: 0 3px 6px 3px;
  border: 1px solid #d1d2d4;
  box-shadow: inset 0 0 0 1px #fafafa;
  background: #d5d6d8;
  border-radius: 0;
  color: #77777a;
  font: 15px/20px "Noto Sans", sans-serif;
  outline: 0;
}
.spin { display: flex; flex-direction: column; gap: 11px; padding: 5px 0 0 10px; }
.spin svg { width: 8px; height: 6px; fill: none; stroke: #aaaaad; stroke-width: 2; }
.splitter {
  position: absolute;
  z-index: 2;
  left: 280px;
  top: 341px;
  width: 14px;
  height: 59px;
  border: 1px solid #858588;
  border-left: 0;
  background: #f4f5f7;
}

/* Graphics area */
.viewport { position: relative; flex: 1; min-width: 0; overflow: hidden; }
.scene { position: absolute; left: 0; top: 0; }
.axis { font: 15px "Liberation Serif", serif; }
.tree { position: absolute; left: 11px; top: 6px; display: flex; align-items: center; gap: 17px; font-size: 18px; }
.tree svg + svg { margin-right: -11px; }
.tree span { padding-top: 4px; }
.view-name { position: absolute; left: 11px; bottom: -7px; display: flex; gap: 9px; font-size: 17px; font-weight: bold; }
.task-pane { position: absolute; right: 0; top: 42px; width: 15px; border: 1px solid #77777b; border-right: 0; overflow: hidden; }
.task-pane button { width: 40px; height: 36px; justify-content: flex-start; padding-left: 3px; background: #d5d6d8; border-bottom: 1px solid #77777b; }
.task-pane .active { background: #f4f5f7; }
.task-pane button:last-child { height: 35px; border-bottom: 0; }
```
